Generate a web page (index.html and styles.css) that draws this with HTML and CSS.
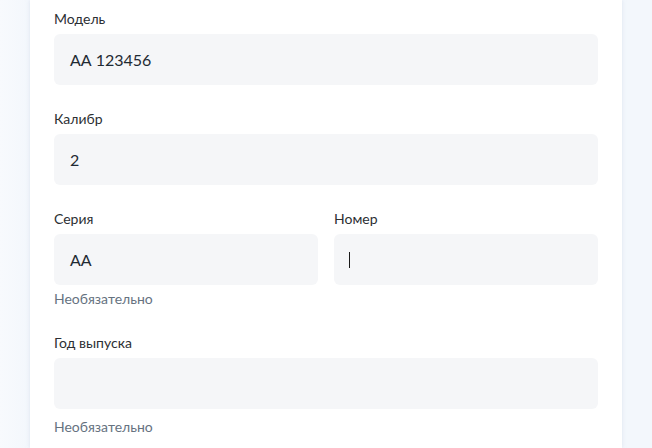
FILE: index.html
```html
<!DOCTYPE html>
<html lang="ru">
<head>
<meta charset="utf-8">
<link rel="stylesheet" href="styles.css">
</head>
<body>
<div class="page">
  <div class="card">
    <div class="field">
      <div class="label">Модель</div>
      <div class="input">АА 123456</div>
    </div>
    <div class="field">
      <div class="label">Калибр</div>
      <div class="input">2</div>
    </div>
    <div class="row">
      <div class="field">
        <div class="label">Серия</div>
        <div class="input">АА</div>
        <div class="hint">Необязательно</div>
      </div>
      <div class="field">
        <div class="label">Номер</div>
        <div class="input"><span class="caret"></span></div>
      </div>
    </div>
    <div class="field">
      <div class="label">Год выпуска</div>
      <div class="input"></div>
      <div class="hint hint-wide">Необязательно</div>
    </div>
  </div>
</div>
</body>
</html>
```
FILE: styles.css
```css
html, body {
  margin: 0;
  padding: 0;
}
body {
  background: linear-gradient(90deg, #f8fafd 0, #f3f7fc 30px, #f3f7fc 100%);
  font-family: Lato, "Noto Sans", sans-serif;
  width: 652px;
  height: 448px;
  overflow: hidden;
}
.page {
  padding-left: 30px;
}
.card {
  width: 592px;
  box-sizing: border-box;
  background: #ffffff;
  padding: 9px 24px 11px;
  box-shadow: 0 0 4px rgba(180, 195, 215, 0.35);
  display: flex;
  flex-direction: column;
  gap: 24px;
}
.row {
  display: flex;
  gap: 16px;
}
.row .field {
  flex: 1;
}
.label {
  font-size: 14px;
  line-height: 20px;
  color: #2c2f33;
  margin-bottom: 5px;
}
.input {
  height: 51px;
  box-sizing: border-box;
  background: #f5f6f8;
  border-radius: 6px;
  padding: 0 16px;
  display: flex;
  align-items: center;
  font-size: 16px;
  color: #1f2a33;
}
.caret {
  display: block;
  width: 1px;
  height: 16px;
  background: #1a1a1a;
  margin-left: -1px;
}
.hint {
  font-size: 14px;
  line-height: 20px;
  color: #66727f;
  margin-top: 4px;
}
.hint-wide {
  margin-top: 8px;
}
```
